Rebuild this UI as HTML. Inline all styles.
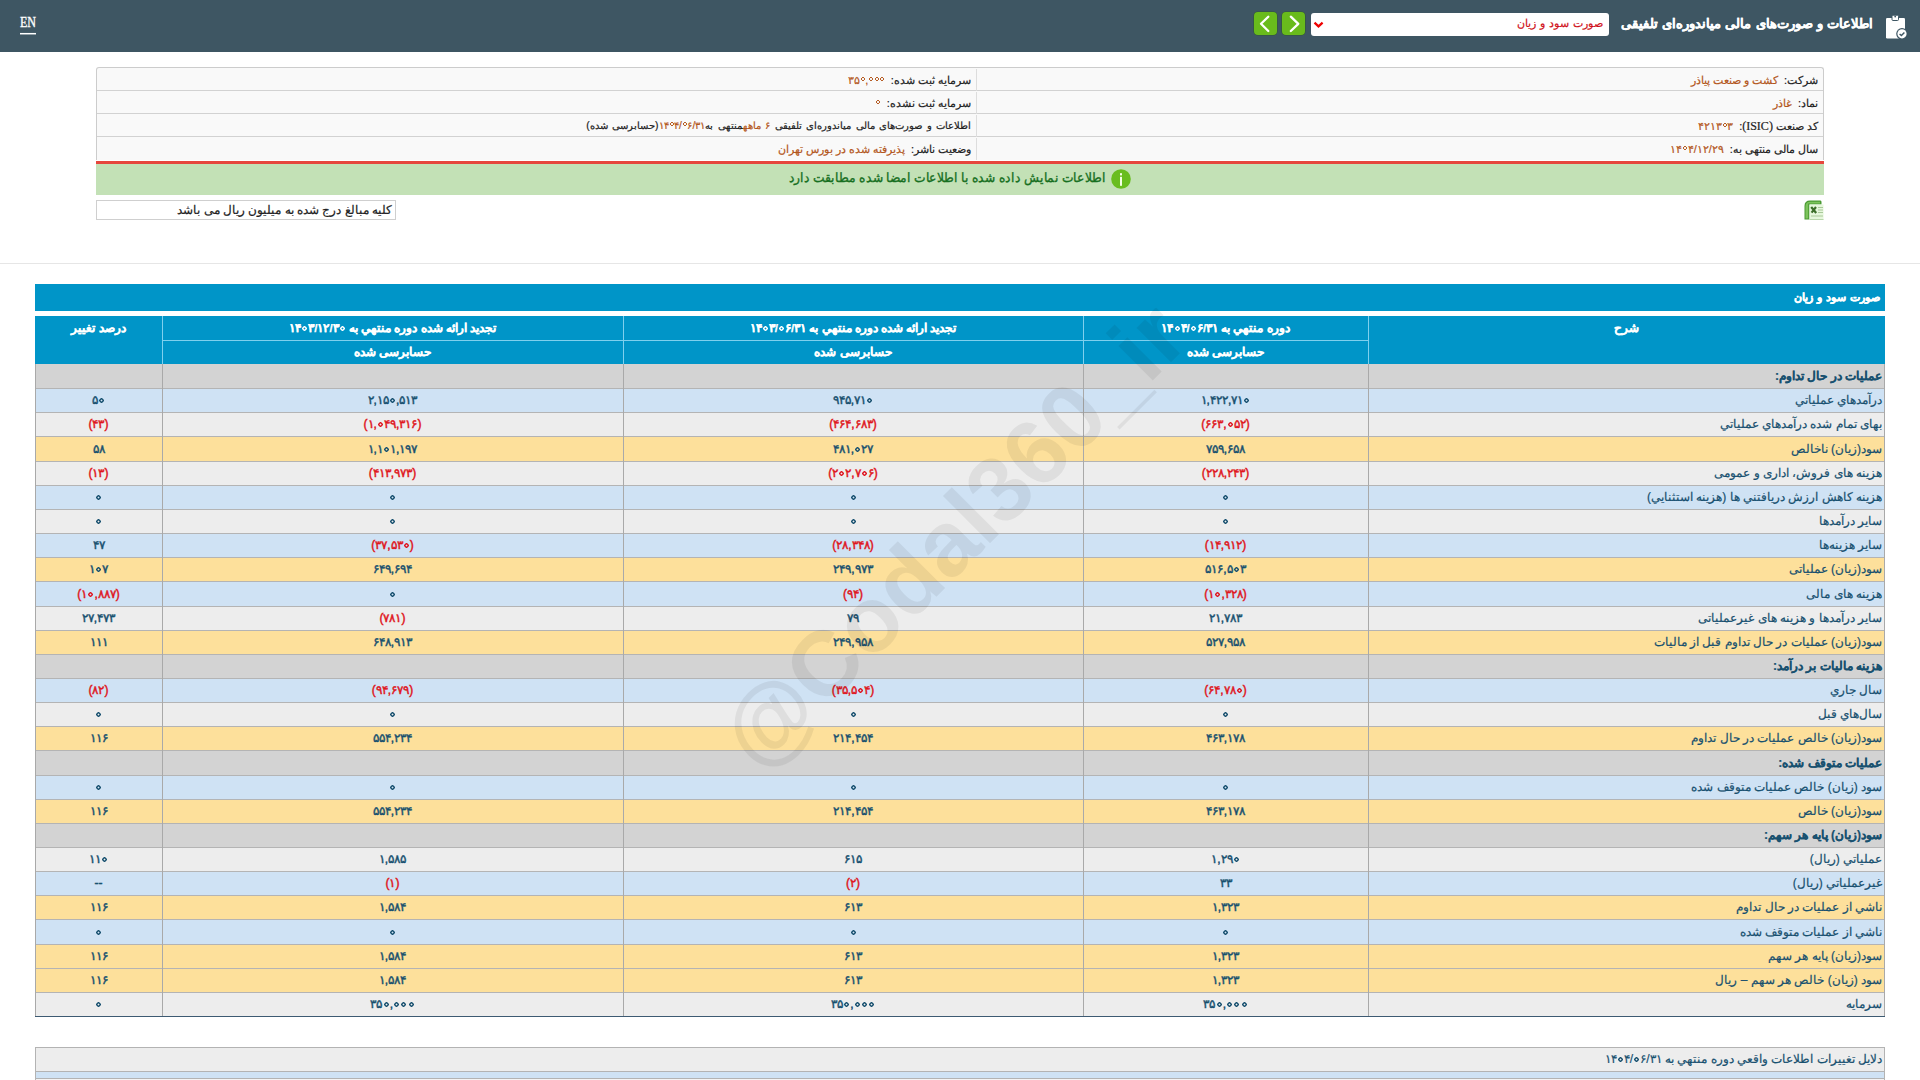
<!DOCTYPE html>
<html lang="fa">
<head>
<meta charset="utf-8">
<style>
*{box-sizing:border-box;margin:0;padding:0}
html,body{width:1920px;height:1080px;overflow:hidden;background:#fff;font-family:"Liberation Sans",sans-serif;color:#222}
.abs{position:absolute}
#hdr{left:0;top:0;width:1920px;height:52px;background:#3e5663}
#en{left:20px;top:16px;transform:scaleX(0.86);transform-origin:0 0;font-family:"Liberation Serif",serif;font-size:14px;font-weight:normal;-webkit-text-stroke:0.35px #fff;color:#fff;letter-spacing:0;line-height:14px}
#enl{left:20px;top:32px;width:16px;height:2px;background:#fff;transform:translateY(0.7px) scaleY(0.75)}
#ttl{-webkit-text-stroke:0.3px #fff;right:47px;top:16px;font-size:13px;word-spacing:0.6px;font-weight:bold;color:#fff;direction:rtl;white-space:nowrap}
#sel{left:1311px;top:13px;width:298px;height:23px;background:#fff;border-radius:3px}
#selt{-webkit-text-stroke:0.2px #d0101a;right:6px;top:4px;font-size:11px;word-spacing:1px;color:#d0101a;direction:rtl;white-space:nowrap}
.gb{top:12px;width:23px;height:23px;background:#69bb1c;border-radius:4px;box-shadow:0 0 0 0.6px rgba(40,90,20,0.6)}
/* info box */
#info{left:96px;top:67px;width:1728px;border-top:1px solid #ccc;border-left:1px solid #ccc;border-right:1px solid #ccc;border-radius:3px 3px 0 0;background:#f9f9f9}
.ir{height:23px;border-bottom:1px solid #d2d2d2;position:relative;direction:rtl}
.ir:last-child{border-bottom:none}
.ic{position:absolute;top:1px;height:22px;line-height:22px;-webkit-text-stroke:0.2px currentColor;font-size:11px;white-space:nowrap;padding-right:5px}
.ic.r{right:0;width:847px;border-left:1px solid #ddd}
.ic.l{right:847px;width:879px}
.v{color:#b3561b;margin-right:6px}
#red{left:96px;top:161px;width:1728px;height:3px;background:#e6463d}
#grn{left:96px;top:164px;width:1728px;height:31px;background:#c3e1b6}
#units{-webkit-text-stroke:0.2px #222;left:96px;top:200px;width:300px;height:20px;border:1px solid #cfcfcf;background:#fff;font-size:12px;direction:rtl;padding-right:3px;line-height:18px;white-space:nowrap}
#sep{left:0;top:263px;width:1920px;height:1px;background:#e6e6e6}
/* main table */
#bar{left:35px;top:284px;width:1850px;height:27px;background:#0095c8}
#bart{right:5px;top:7px;-webkit-text-stroke:0.35px #fff;font-size:11px;word-spacing:1px;font-weight:bold;color:#fff;direction:rtl;white-space:nowrap}
#grnt{right:718px;top:6px;font-size:13px;transform:scaleX(0.942);transform-origin:100% 50%;-webkit-text-stroke:0.35px #176f1f;font-weight:normal;color:#176f1f;direction:rtl;white-space:nowrap}
.ic .z{width:4px;height:4px;vertical-align:3px;margin:0 0.5px 0 1px;background:radial-gradient(circle closest-side,transparent 35%,currentColor 50%,currentColor 78%,transparent 100%)}

#tbl{left:35px;top:316px;width:1850px;height:702px}
.hd{position:absolute;background:#0095c8;color:#fff;font-weight:bold;-webkit-text-stroke:0.25px #fff;font-size:11.5px;text-align:center;direction:rtl;white-space:nowrap}
.vl{position:absolute;width:1px}
.row{position:absolute;left:35px;width:1850px;border-bottom:1px solid #b4b4b4}
.row.s{background:#d3d3d3}
.row.b{background:#cfe2f4}
.row.g{background:#ededed}
.row.y{background:#fde09b}
.c{position:absolute;top:0;height:100%;white-space:nowrap;direction:rtl;font-size:12px;color:#17506f;-webkit-text-stroke:0.2px currentColor}
.c.d{right:3px;text-align:right}
.c.n{text-align:center;font-weight:normal;font-size:12px;-webkit-text-stroke:0.45px currentColor}
.row.s .c.d{font-weight:bold}
.neg{color:#df1520;-webkit-text-stroke:0.25px currentColor}
.z{display:inline-block;width:5px;height:5px;background:radial-gradient(circle closest-side,transparent 30%,currentColor 45%,currentColor 80%,transparent 100%);vertical-align:1.5px;margin:0 1px 0 1.2px;font-style:normal}
#wm{position:absolute;left:953px;top:535px;transform:translate(-50%,-50%) rotate(-45deg);font-family:"Liberation Sans",sans-serif;font-weight:bold;font-size:92px;line-height:1;color:rgba(0,0,0,0.062);white-space:nowrap}
</style>
</head>
<body><div id="hdr" class="abs"></div>
<div id="en" class="abs">EN</div>
<div id="enl" class="abs"></div>
<div id="ttl" class="abs">اطلاعات و صورت‌های مالی میاندوره‌ای تلفیقی</div>
<svg class="abs" style="left:1880px;top:12px" width="32" height="32" viewBox="0 0 32 32">
 <rect x="6" y="6" width="19" height="20.5" rx="1.2" fill="#fff"/>
 <rect x="12" y="3.2" width="6.5" height="5.3" rx="1" fill="#fff" stroke="#3e5663" stroke-width="1"/>
 <circle cx="15.2" cy="4.6" r="0.9" fill="#3e5663"/>
 <circle cx="22" cy="21.8" r="5.8" fill="#3e5663"/>
 <circle cx="22" cy="21.8" r="4.6" fill="#fff"/>
 <path d="M19.6 21.9 L21.4 23.5 L24.4 20.4" fill="none" stroke="#3e5663" stroke-width="1.4"/>
</svg>
<div id="sel" class="abs"><div id="selt" class="abs">صورت سود و زیان</div>
 <svg class="abs" style="left:2px;top:8px" width="12" height="8" viewBox="0 0 12 8"><path d="M1.5 1.6 L5.5 5.4 L9.6 1.6" fill="none" stroke="#e00" stroke-width="2.2"/></svg>
</div>
<div class="abs gb" style="left:1254px"><svg width="23" height="23" viewBox="0 0 23 23"><path d="M14.3 4.7 L7 11.8 L14.3 19" fill="none" stroke="#fff" stroke-width="2.3" stroke-linecap="round" stroke-linejoin="round"/></svg></div>
<div class="abs gb" style="left:1282px"><svg width="23" height="23" viewBox="0 0 23 23"><path d="M8.8 4.7 L16.3 11.8 L8.8 19" fill="none" stroke="#fff" stroke-width="2.3" stroke-linecap="round" stroke-linejoin="round"/></svg></div>

<div id="info" class="abs">
 <div class="ir"><div class="ic r">شرکت:<span class="v">کشت و صنعت پیاذر</span></div><div class="ic l">سرمایه ثبت شده:<span class="v"><bdi dir="ltr">۳۵<i class="z"></i>,<i class="z"></i><i class="z"></i><i class="z"></i></bdi></span></div></div>
 <div class="ir"><div class="ic r">نماد:<span class="v">غاذر</span></div><div class="ic l">سرمایه ثبت نشده:<span class="v"><bdi dir="ltr"><i class="z"></i></bdi></span></div></div>
 <div class="ir"><div class="ic r">کد صنعت <span style="font-family:'Liberation Serif',serif;font-size:12px">(ISIC)</span>:<span class="v"><bdi dir="ltr">۴۲۱۳<i class="z"></i>۳</bdi></span></div><div class="ic l" style="font-size:10.3px;word-spacing:1.6px">اطلاعات و صورت‌های مالی میاندوره‌ای تلفیقی <span style="color:#b3561b"><bdi dir="ltr">۶</bdi> ماهه</span>منتهی به<span style="color:#b3561b"><bdi dir="ltr">۱۴<i class="z"></i>۴/<i class="z"></i>۶/۳۱</bdi></span>(حسابرسی شده)</div></div>
 <div class="ir"><div class="ic r">سال مالی منتهی به:<span class="v"><bdi dir="ltr">۱۴<i class="z"></i>۴/۱۲/۲۹</bdi></span></div><div class="ic l">وضعیت ناشر:<span class="v">پذیرفته شده در بورس تهران</span></div></div>
</div>
<div id="red" class="abs"></div>
<div id="grn" class="abs">
 <div id="grnt" class="abs">اطلاعات نمایش داده شده با اطلاعات امضا شده مطابقت دارد</div>
 <svg class="abs" style="left:1015px;top:5px" width="20" height="20" viewBox="0 0 20 20"><circle cx="10" cy="10" r="9.8" fill="#69bd1f"/><rect x="9" y="4.2" width="2" height="2.2" fill="#f4ffe6"/><rect x="9" y="7.8" width="2" height="9" fill="#f4ffe6"/></svg>
</div>
<svg class="abs" style="left:1804px;top:200px" width="20" height="20" viewBox="0 0 20 20">
 <path d="M0.5 19.5 L0.5 6 Q0.5 0.5 6 0.5 L16.5 0.5 Q17.5 0.5 17.5 2 L17.5 4.5 L5.5 4.5 L5.5 19.5 Z" fill="#4a9a33"/>
 <path d="M1.5 18.5 L1.5 6.5 Q1.5 1.8 6 1.8 L16 1.8 L16 3.6 L4.2 3.6 L4.2 18.5 Z" fill="#7cc35c"/>
 <rect x="5.5" y="4.5" width="14" height="15.2" fill="#e6f7dc"/>
 <path d="M7.2 7 L12.2 13 M12 7 L7.6 12.6" stroke="#3c6e2a" stroke-width="2.2"/>
 <path d="M14 7.5 H19 M14 10 H19 M14 12.5 H19 M7 16 H19" stroke="#a9c99a" stroke-width="1.1"/>
 <path d="M5.5 19.5 H19.5" stroke="#b9d7ab" stroke-width="1"/>
</svg>
<div id="units" class="abs">کلیه مبالغ درج شده به میلیون ریال می باشد</div>
<div id="sep" class="abs"></div>
<div id="bar" class="abs"><div id="bart" class="abs">صورت سود و زیان</div></div>

<div class="abs" style="left:35px;top:316px;width:1850px;height:48px;background:#0095c8"></div>
<div class="vl" style="left:162px;top:316px;height:48px;background:#7fd0ee"></div>
<div class="vl" style="left:623px;top:316px;height:48px;background:#7fd0ee"></div>
<div class="vl" style="left:1083px;top:316px;height:48px;background:#7fd0ee"></div>
<div class="vl" style="left:1368px;top:316px;height:48px;background:#7fd0ee"></div>
<div class="abs" style="left:162px;top:340px;width:1206px;height:1px;background:#7fd0ee"></div>
<div class="hd" style="left:1368px;top:321px;width:516px;background:transparent">شرح</div>
<div class="hd" style="left:1083px;top:321px;width:285px;background:transparent">دوره منتهي به <bdi dir="ltr">۱۴<i class="z"></i>۴/<i class="z"></i>۶/۳۱</bdi></div>
<div class="hd" style="left:623px;top:321px;width:460px;background:transparent">تجدید ارائه شده دوره منتهي به <bdi dir="ltr">۱۴<i class="z"></i>۳/<i class="z"></i>۶/۳۱</bdi></div>
<div class="hd" style="left:162px;top:321px;width:461px;background:transparent">تجدید ارائه شده دوره منتهي به <bdi dir="ltr">۱۴<i class="z"></i>۳/۱۲/۳<i class="z"></i></bdi></div>
<div class="hd" style="left:35px;top:321px;width:127px;background:transparent">درصد تغییر</div>
<div class="hd" style="left:1083px;top:345px;width:285px;background:transparent">حسابرسی شده</div>
<div class="hd" style="left:623px;top:345px;width:460px;background:transparent">حسابرسی شده</div>
<div class="hd" style="left:162px;top:345px;width:461px;background:transparent">حسابرسی شده</div>
<div class="row s" style="top:364px;height:25px;"><div class="c d" style="line-height:24px">عملیات در حال تداوم:</div></div>
<div class="row b" style="top:389px;height:24px;"><div class="c d" style="line-height:23px">درآمدهاي عملياتي</div><div class="c n" style="left:1048px;width:285px;line-height:23px"><bdi dir="ltr">۱,۴۲۲,۷۱<i class="z"></i></bdi></div><div class="c n" style="left:588px;width:460px;line-height:23px"><bdi dir="ltr">۹۴۵,۷۱<i class="z"></i></bdi></div><div class="c n" style="left:127px;width:461px;line-height:23px"><bdi dir="ltr">۲,۱۵<i class="z"></i>,۵۱۳</bdi></div><div class="c n" style="left:0px;width:127px;line-height:23px"><bdi dir="ltr">۵<i class="z"></i></bdi></div></div>
<div class="row g" style="top:413px;height:24px;"><div class="c d" style="line-height:23px">بهای تمام شده درآمدهاي عملياتي</div><div class="c n neg" style="left:1048px;width:285px;line-height:23px"><bdi dir="ltr">(۶۶۳,<i class="z"></i>۵۲)</bdi></div><div class="c n neg" style="left:588px;width:460px;line-height:23px"><bdi dir="ltr">(۴۶۴,۶۸۳)</bdi></div><div class="c n neg" style="left:127px;width:461px;line-height:23px"><bdi dir="ltr">(۱,<i class="z"></i>۴۹,۳۱۶)</bdi></div><div class="c n neg" style="left:0px;width:127px;line-height:23px"><bdi dir="ltr">(۴۳)</bdi></div></div>
<div class="row y" style="top:437px;height:25px;"><div class="c d" style="line-height:24px">سود(زيان) ناخالص</div><div class="c n" style="left:1048px;width:285px;line-height:24px"><bdi dir="ltr">۷۵۹,۶۵۸</bdi></div><div class="c n" style="left:588px;width:460px;line-height:24px"><bdi dir="ltr">۴۸۱,<i class="z"></i>۲۷</bdi></div><div class="c n" style="left:127px;width:461px;line-height:24px"><bdi dir="ltr">۱,۱<i class="z"></i>۱,۱۹۷</bdi></div><div class="c n" style="left:0px;width:127px;line-height:24px"><bdi dir="ltr">۵۸</bdi></div></div>
<div class="row g" style="top:462px;height:24px;"><div class="c d" style="line-height:23px">هزینه های فروش، اداری و عمومی</div><div class="c n neg" style="left:1048px;width:285px;line-height:23px"><bdi dir="ltr">(۲۲۸,۲۴۳)</bdi></div><div class="c n neg" style="left:588px;width:460px;line-height:23px"><bdi dir="ltr">(۲<i class="z"></i>۲,۷<i class="z"></i>۶)</bdi></div><div class="c n neg" style="left:127px;width:461px;line-height:23px"><bdi dir="ltr">(۴۱۳,۹۷۳)</bdi></div><div class="c n neg" style="left:0px;width:127px;line-height:23px"><bdi dir="ltr">(۱۳)</bdi></div></div>
<div class="row b" style="top:486px;height:24px;"><div class="c d" style="line-height:23px">هزینه کاهش ارزش دريافتني ها (هزينه استثنايي)</div><div class="c n" style="left:1048px;width:285px;line-height:23px"><bdi dir="ltr"><i class="z"></i></bdi></div><div class="c n" style="left:588px;width:460px;line-height:23px"><bdi dir="ltr"><i class="z"></i></bdi></div><div class="c n" style="left:127px;width:461px;line-height:23px"><bdi dir="ltr"><i class="z"></i></bdi></div><div class="c n" style="left:0px;width:127px;line-height:23px"><bdi dir="ltr"><i class="z"></i></bdi></div></div>
<div class="row g" style="top:510px;height:24px;"><div class="c d" style="line-height:23px">ساير درآمدها</div><div class="c n" style="left:1048px;width:285px;line-height:23px"><bdi dir="ltr"><i class="z"></i></bdi></div><div class="c n" style="left:588px;width:460px;line-height:23px"><bdi dir="ltr"><i class="z"></i></bdi></div><div class="c n" style="left:127px;width:461px;line-height:23px"><bdi dir="ltr"><i class="z"></i></bdi></div><div class="c n" style="left:0px;width:127px;line-height:23px"><bdi dir="ltr"><i class="z"></i></bdi></div></div>
<div class="row b" style="top:534px;height:24px;"><div class="c d" style="line-height:23px">ساير هزینه‌ها</div><div class="c n neg" style="left:1048px;width:285px;line-height:23px"><bdi dir="ltr">(۱۴,۹۱۲)</bdi></div><div class="c n neg" style="left:588px;width:460px;line-height:23px"><bdi dir="ltr">(۲۸,۳۴۸)</bdi></div><div class="c n neg" style="left:127px;width:461px;line-height:23px"><bdi dir="ltr">(۳۷,۵۳<i class="z"></i>)</bdi></div><div class="c n" style="left:0px;width:127px;line-height:23px"><bdi dir="ltr">۴۷</bdi></div></div>
<div class="row y" style="top:558px;height:24px;"><div class="c d" style="line-height:23px">سود(زيان) عملیاتی</div><div class="c n" style="left:1048px;width:285px;line-height:23px"><bdi dir="ltr">۵۱۶,۵<i class="z"></i>۳</bdi></div><div class="c n" style="left:588px;width:460px;line-height:23px"><bdi dir="ltr">۲۴۹,۹۷۳</bdi></div><div class="c n" style="left:127px;width:461px;line-height:23px"><bdi dir="ltr">۶۴۹,۶۹۴</bdi></div><div class="c n" style="left:0px;width:127px;line-height:23px"><bdi dir="ltr">۱<i class="z"></i>۷</bdi></div></div>
<div class="row b" style="top:582px;height:25px;"><div class="c d" style="line-height:24px">هزینه های مالی</div><div class="c n neg" style="left:1048px;width:285px;line-height:24px"><bdi dir="ltr">(۱<i class="z"></i>,۳۲۸)</bdi></div><div class="c n neg" style="left:588px;width:460px;line-height:24px"><bdi dir="ltr">(۹۴)</bdi></div><div class="c n" style="left:127px;width:461px;line-height:24px"><bdi dir="ltr"><i class="z"></i></bdi></div><div class="c n neg" style="left:0px;width:127px;line-height:24px"><bdi dir="ltr">(۱<i class="z"></i>,۸۸۷)</bdi></div></div>
<div class="row g" style="top:607px;height:24px;"><div class="c d" style="line-height:23px">سایر درآمدها و هزینه های غیرعملیاتی</div><div class="c n" style="left:1048px;width:285px;line-height:23px"><bdi dir="ltr">۲۱,۷۸۳</bdi></div><div class="c n" style="left:588px;width:460px;line-height:23px"><bdi dir="ltr">۷۹</bdi></div><div class="c n neg" style="left:127px;width:461px;line-height:23px"><bdi dir="ltr">(۷۸۱)</bdi></div><div class="c n" style="left:0px;width:127px;line-height:23px"><bdi dir="ltr">۲۷,۴۷۳</bdi></div></div>
<div class="row y" style="top:631px;height:24px;"><div class="c d" style="line-height:23px">سود(زيان) عمليات در حال تداوم قبل از ماليات</div><div class="c n" style="left:1048px;width:285px;line-height:23px"><bdi dir="ltr">۵۲۷,۹۵۸</bdi></div><div class="c n" style="left:588px;width:460px;line-height:23px"><bdi dir="ltr">۲۴۹,۹۵۸</bdi></div><div class="c n" style="left:127px;width:461px;line-height:23px"><bdi dir="ltr">۶۴۸,۹۱۳</bdi></div><div class="c n" style="left:0px;width:127px;line-height:23px"><bdi dir="ltr">۱۱۱</bdi></div></div>
<div class="row s" style="top:655px;height:24px;"><div class="c d" style="line-height:23px">هزینه مالیات بر درآمد:</div></div>
<div class="row b" style="top:679px;height:24px;"><div class="c d" style="line-height:23px">سال جاري</div><div class="c n neg" style="left:1048px;width:285px;line-height:23px"><bdi dir="ltr">(۶۴,۷۸<i class="z"></i>)</bdi></div><div class="c n neg" style="left:588px;width:460px;line-height:23px"><bdi dir="ltr">(۳۵,۵<i class="z"></i>۴)</bdi></div><div class="c n neg" style="left:127px;width:461px;line-height:23px"><bdi dir="ltr">(۹۴,۶۷۹)</bdi></div><div class="c n neg" style="left:0px;width:127px;line-height:23px"><bdi dir="ltr">(۸۲)</bdi></div></div>
<div class="row g" style="top:703px;height:24px;"><div class="c d" style="line-height:23px">سال‌هاي قبل</div><div class="c n" style="left:1048px;width:285px;line-height:23px"><bdi dir="ltr"><i class="z"></i></bdi></div><div class="c n" style="left:588px;width:460px;line-height:23px"><bdi dir="ltr"><i class="z"></i></bdi></div><div class="c n" style="left:127px;width:461px;line-height:23px"><bdi dir="ltr"><i class="z"></i></bdi></div><div class="c n" style="left:0px;width:127px;line-height:23px"><bdi dir="ltr"><i class="z"></i></bdi></div></div>
<div class="row y" style="top:727px;height:24px;"><div class="c d" style="line-height:23px">سود(زيان) خالص عمليات در حال تداوم</div><div class="c n" style="left:1048px;width:285px;line-height:23px"><bdi dir="ltr">۴۶۳,۱۷۸</bdi></div><div class="c n" style="left:588px;width:460px;line-height:23px"><bdi dir="ltr">۲۱۴,۴۵۴</bdi></div><div class="c n" style="left:127px;width:461px;line-height:23px"><bdi dir="ltr">۵۵۴,۲۳۴</bdi></div><div class="c n" style="left:0px;width:127px;line-height:23px"><bdi dir="ltr">۱۱۶</bdi></div></div>
<div class="row s" style="top:751px;height:25px;"><div class="c d" style="line-height:24px">عملیات متوقف شده:</div></div>
<div class="row b" style="top:776px;height:24px;"><div class="c d" style="line-height:23px">سود (زيان) خالص عمليات متوقف شده</div><div class="c n" style="left:1048px;width:285px;line-height:23px"><bdi dir="ltr"><i class="z"></i></bdi></div><div class="c n" style="left:588px;width:460px;line-height:23px"><bdi dir="ltr"><i class="z"></i></bdi></div><div class="c n" style="left:127px;width:461px;line-height:23px"><bdi dir="ltr"><i class="z"></i></bdi></div><div class="c n" style="left:0px;width:127px;line-height:23px"><bdi dir="ltr"><i class="z"></i></bdi></div></div>
<div class="row y" style="top:800px;height:24px;"><div class="c d" style="line-height:23px">سود(زيان) خالص</div><div class="c n" style="left:1048px;width:285px;line-height:23px"><bdi dir="ltr">۴۶۳,۱۷۸</bdi></div><div class="c n" style="left:588px;width:460px;line-height:23px"><bdi dir="ltr">۲۱۴,۴۵۴</bdi></div><div class="c n" style="left:127px;width:461px;line-height:23px"><bdi dir="ltr">۵۵۴,۲۳۴</bdi></div><div class="c n" style="left:0px;width:127px;line-height:23px"><bdi dir="ltr">۱۱۶</bdi></div></div>
<div class="row s" style="top:824px;height:24px;"><div class="c d" style="line-height:23px">سود(زيان) پايه هر سهم:</div></div>
<div class="row g" style="top:848px;height:24px;"><div class="c d" style="line-height:23px">عملياتي (ريال)</div><div class="c n" style="left:1048px;width:285px;line-height:23px"><bdi dir="ltr">۱,۲۹<i class="z"></i></bdi></div><div class="c n" style="left:588px;width:460px;line-height:23px"><bdi dir="ltr">۶۱۵</bdi></div><div class="c n" style="left:127px;width:461px;line-height:23px"><bdi dir="ltr">۱,۵۸۵</bdi></div><div class="c n" style="left:0px;width:127px;line-height:23px"><bdi dir="ltr">۱۱<i class="z"></i></bdi></div></div>
<div class="row b" style="top:872px;height:24px;"><div class="c d" style="line-height:23px">غيرعملياتي (ريال)</div><div class="c n" style="left:1048px;width:285px;line-height:23px"><bdi dir="ltr">۳۳</bdi></div><div class="c n neg" style="left:588px;width:460px;line-height:23px"><bdi dir="ltr">(۲)</bdi></div><div class="c n neg" style="left:127px;width:461px;line-height:23px"><bdi dir="ltr">(۱)</bdi></div><div class="c n" style="left:0px;width:127px;line-height:23px">--</div></div>
<div class="row y" style="top:896px;height:24px;"><div class="c d" style="line-height:23px">ناشي از عمليات در حال تداوم</div><div class="c n" style="left:1048px;width:285px;line-height:23px"><bdi dir="ltr">۱,۳۲۳</bdi></div><div class="c n" style="left:588px;width:460px;line-height:23px"><bdi dir="ltr">۶۱۳</bdi></div><div class="c n" style="left:127px;width:461px;line-height:23px"><bdi dir="ltr">۱,۵۸۴</bdi></div><div class="c n" style="left:0px;width:127px;line-height:23px"><bdi dir="ltr">۱۱۶</bdi></div></div>
<div class="row b" style="top:920px;height:25px;"><div class="c d" style="line-height:24px">ناشي از عمليات متوقف شده</div><div class="c n" style="left:1048px;width:285px;line-height:24px"><bdi dir="ltr"><i class="z"></i></bdi></div><div class="c n" style="left:588px;width:460px;line-height:24px"><bdi dir="ltr"><i class="z"></i></bdi></div><div class="c n" style="left:127px;width:461px;line-height:24px"><bdi dir="ltr"><i class="z"></i></bdi></div><div class="c n" style="left:0px;width:127px;line-height:24px"><bdi dir="ltr"><i class="z"></i></bdi></div></div>
<div class="row y" style="top:945px;height:24px;"><div class="c d" style="line-height:23px">سود(زيان) پايه هر سهم</div><div class="c n" style="left:1048px;width:285px;line-height:23px"><bdi dir="ltr">۱,۳۲۳</bdi></div><div class="c n" style="left:588px;width:460px;line-height:23px"><bdi dir="ltr">۶۱۳</bdi></div><div class="c n" style="left:127px;width:461px;line-height:23px"><bdi dir="ltr">۱,۵۸۴</bdi></div><div class="c n" style="left:0px;width:127px;line-height:23px"><bdi dir="ltr">۱۱۶</bdi></div></div>
<div class="row y" style="top:969px;height:24px;"><div class="c d" style="line-height:23px">سود (زيان) خالص هر سهم – ريال</div><div class="c n" style="left:1048px;width:285px;line-height:23px"><bdi dir="ltr">۱,۳۲۳</bdi></div><div class="c n" style="left:588px;width:460px;line-height:23px"><bdi dir="ltr">۶۱۳</bdi></div><div class="c n" style="left:127px;width:461px;line-height:23px"><bdi dir="ltr">۱,۵۸۴</bdi></div><div class="c n" style="left:0px;width:127px;line-height:23px"><bdi dir="ltr">۱۱۶</bdi></div></div>
<div class="row g" style="top:993px;height:24px;border-bottom:1px solid #3d5a72;"><div class="c d" style="line-height:23px">سرمايه</div><div class="c n" style="left:1048px;width:285px;line-height:23px"><bdi dir="ltr">۳۵<i class="z"></i>,<i class="z"></i><i class="z"></i><i class="z"></i></bdi></div><div class="c n" style="left:588px;width:460px;line-height:23px"><bdi dir="ltr">۳۵<i class="z"></i>,<i class="z"></i><i class="z"></i><i class="z"></i></bdi></div><div class="c n" style="left:127px;width:461px;line-height:23px"><bdi dir="ltr">۳۵<i class="z"></i>,<i class="z"></i><i class="z"></i><i class="z"></i></bdi></div><div class="c n" style="left:0px;width:127px;line-height:23px"><bdi dir="ltr"><i class="z"></i></bdi></div></div>
<div class="vl" style="left:35px;top:364px;height:652px;background:#a9a9a9"></div>
<div class="vl" style="left:162px;top:364px;height:652px;background:#a9a9a9"></div>
<div class="vl" style="left:623px;top:364px;height:652px;background:#a9a9a9"></div>
<div class="vl" style="left:1083px;top:364px;height:652px;background:#a9a9a9"></div>
<div class="vl" style="left:1368px;top:364px;height:652px;background:#a9a9a9"></div>
<div class="vl" style="left:1884px;top:364px;height:652px;background:#a9a9a9"></div>
<div class="abs" style="left:35px;top:1047px;width:1850px;height:33px;border:1px solid #b3b3b3;border-bottom:none;background:#ededed"></div>
<div class="abs" style="left:36px;top:1071px;width:1848px;height:1px;background:#b3b3b3"></div>
<div class="abs" style="left:36px;top:1072px;width:1848px;height:6px;background:#cfe2f4"></div>
<div class="abs" style="left:36px;top:1078px;width:1848px;height:1px;background:#b3b3b3"></div>
<div class="abs" style="left:36px;top:1079px;width:1848px;height:1px;background:#f3f3f3"></div>
<div class="abs" style="right:38px;top:1048px;height:23px;line-height:23px;font-size:12px;color:#17506f;-webkit-text-stroke:0.2px #17506f;direction:rtl;white-space:nowrap">دلایل تغییرات اطلاعات واقعي دوره منتهي به <bdi dir="ltr">۱۴<i class="z"></i>۴/<i class="z"></i>۶/۳۱</bdi></div>
<div id="wm"><span id="wa">@</span>Codal360<span id="wu">_</span>ir</div>
</body>
</html>
